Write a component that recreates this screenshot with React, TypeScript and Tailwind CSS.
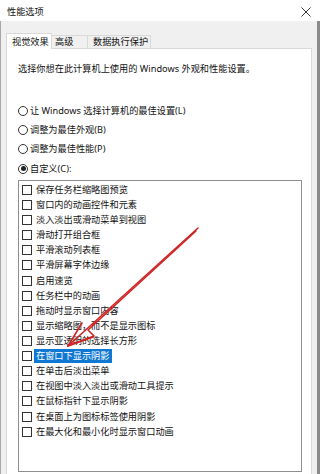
import React from "react";

const items = [
  "保存任务栏缩略图预览",
  "窗口内的动画控件和元素",
  "淡入淡出或滑动菜单到视图",
  "滑动打开组合框",
  "平滑滚动列表框",
  "平滑屏幕字体边缘",
  "启用速览",
  "任务栏中的动画",
  "拖动时显示窗口内容",
  "显示缩略图，而不是显示图标",
  "显示亚透明的选择长方形",
  "在窗口下显示阴影",
  "在单击后淡出菜单",
  "在视图中淡入淡出或滑动工具提示",
  "在鼠标指针下显示阴影",
  "在桌面上为图标标签使用阴影",
  "在最大化和最小化时显示窗口动画",
];

const radios = [
  { label: "让 Windows 选择计算机的最佳设置(L)", checked: false },
  { label: "调整为最佳外观(B)", checked: false },
  { label: "调整为最佳性能(P)", checked: false },
  { label: "自定义(C):", checked: true },
];

function Radio({ checked }: { checked: boolean }) {
  return (
    <span className="w-[10px] h-[10px] rounded-full border border-[#333333] bg-white flex items-center justify-center shrink-0">
      {checked && <span className="w-[5px] h-[5px] rounded-full bg-[#222222]" />}
    </span>
  );
}

export default function App() {
  return (
    <div className="w-[320px] h-[474px] overflow-hidden relative flex flex-col bg-white text-[9.2px] leading-[12px] text-[#111111] font-['Noto_Sans','Noto_Sans_CJK_SC',sans-serif]">
      {/* Title bar */}
      <div className="h-[21px] shrink-0 bg-white flex items-center justify-between pl-[7px] pr-[8px] pt-[3px]">
        <span>性能选项</span>
        <svg width="10" height="10" viewBox="0 0 10 10" className="mr-[1px]">
          <path d="M0.5 0.5 L9.5 9.5 M9.5 0.5 L0.5 9.5" stroke="#333333" strokeWidth="1" />
        </svg>
      </div>

      {/* Body */}
      <div className="flex-1 flex flex-col bg-[#f0f0f0] border-l border-l-[#a8a8a8] border-r-[3px] border-r-[#8a8a8a] pl-[5px] pr-[5px]">
        {/* Tabs */}
        <div className="flex items-end pt-[12px] relative z-10 -mb-[1px]">
          <div className="h-[16px] w-[46px] bg-white border border-[#d9d9d9] border-b-0 pl-[5px] flex items-center">
            视觉效果
          </div>
          <div className="h-[14px] w-[36px] bg-[#f0f0f0] border-t border-r border-b border-[#d9d9d9] pl-[3px] flex items-center">
            高级
          </div>
          <div className="h-[14px] w-[63px] bg-[#f0f0f0] border-t border-r border-b border-[#d9d9d9] pl-[5px] flex items-center">
            数据执行保护
          </div>
        </div>

        {/* Panel */}
        <div className="flex-1 bg-white border border-[#d9d9d9] border-b-0 pl-[11px] pr-[9px] pt-[14px] flex flex-col">
          <div className="h-[12px]">选择你想在此计算机上使用的 Windows 外观和性能设置。</div>

          <div className="mt-[26px] flex flex-col">
            {radios.map((r) => (
              <div key={r.label} className="h-[19.33px] flex items-center gap-[2px]">
                <Radio checked={r.checked} />
                <span>{r.label}</span>
              </div>
            ))}
          </div>

          {/* List box */}
          <div className="mt-[1.5px] h-[292px] w-[284px] border border-[#8e8e8e] pt-[1.5px] flex flex-col">
            {items.map((t, i) => (
              <div key={t} className="h-[15.12px] flex items-center pl-[3px]">
                <span className="w-[10px] h-[10px] border border-[#333333] bg-white shrink-0" />
                <span
                  className={
                    i === 11
                      ? "ml-[2px] px-[2px] h-[14px] flex items-center bg-[#0f78d2] text-white"
                      : "ml-[2px] px-[2px]"
                  }
                >
                  {t}
                </span>
              </div>
            ))}
          </div>
        </div>
      </div>

      {/* Red hand-drawn arrow annotation */}
      <svg
        className="absolute left-0 top-0 pointer-events-none"
        width="320"
        height="474"
        viewBox="0 0 320 474"
      >
        <g stroke="#d02525" strokeWidth="1.6" fill="none" strokeLinecap="round" strokeLinejoin="round">
          <path d="M198 228 L68 346" />
          <path d="M196 231 L88 330 L94 336 L70 345" />
          <path d="M68 346 L82 323" />
          <path d="M68 346 L93 337" />
        </g>
      </svg>
    </div>
  );
}
